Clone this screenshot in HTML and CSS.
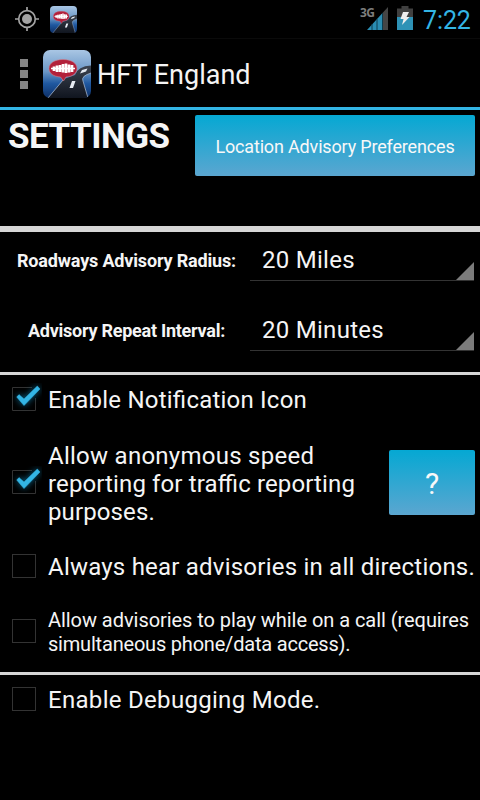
FILE: index.html
```html
<!DOCTYPE html>
<html lang="en">
<head>
  <meta charset="utf-8">
  <title>HFT England</title>
  <meta name="viewport" content="width=device-width, initial-scale=1.0">
  <link rel="stylesheet" href="styles.css">
</head>
<body>
  <!-- Shared icons -->
  <svg class="defs" width="0" height="0">
    <defs>
      <linearGradient id="sky" x1="0" y1="0" x2="0" y2="1">
        <stop offset="0" stop-color="#a9c6e4"/>
        <stop offset=".45" stop-color="#6b97c6"/>
        <stop offset=".7" stop-color="#1f58a0"/>
        <stop offset="1" stop-color="#0d2f66"/>
      </linearGradient>
      <linearGradient id="road" x1="0" y1="0" x2="0" y2="1">
        <stop offset="0" stop-color="#3c4450"/>
        <stop offset="1" stop-color="#10151f"/>
      </linearGradient>
      <clipPath id="tile"><rect width="48" height="48" rx="7"/></clipPath>
    </defs>
    <symbol id="app" viewBox="0 0 48 48">
      <g clip-path="url(#tile)">
        <rect width="48" height="48" fill="url(#sky)"/>
        <path d="M5 48 L21 29 L32 25 Q35 16 48 15.500 V23 Q37 26 40 31 L45 48Z" fill="url(#road)"/>
        <path d="M5 48 L20 30 M45 48 L40 31 Q38 26 48 23" stroke="#a3b4ca" stroke-width=".8" fill="none"/>
        <path d="M29 31 l3.500 0 -2.500 7 -3.500 0z M39 20 l5.500 -1.500 -1.500 3 -6 2z" fill="#e6ebf2"/>
        <path d="M20 9.500 C28.500 9.500 34 13 34 18.500 C34 23.500 29.500 26.500 23 27 L20.500 31 L17.500 27 C10.500 26.500 6 23.500 6 18.500 C6 13 11.500 9.500 20 9.500Z" fill="#b3203a" stroke="#c98592" stroke-width=".6"/>
        <path d="M8 18.500h24" stroke="#fff" stroke-width="1.500"/>
        <path d="M11 16.500v4.500M14 15.500v6.500M17 15v7M20 14v8.500M23 13.500v9.500M26 14.500v8M29 15v7" stroke="#fff" stroke-width="2.700"/>
      </g>
    </symbol>
    <symbol id="check" viewBox="0 0 32 32">
      <path d="M22 4.500H2.500V27.500H25.500V15" fill="none" stroke="#333"/>
      <path class="tick" d="M6.700 14 L9 11.600 L14 16 L27.300 3 L30 6 L14 22.600Z" fill="#33b5e5" stroke="#33b5e5" stroke-width=".5"/>
    </symbol>
    <symbol id="box" viewBox="0 0 32 32">
      <rect x="2.500" y="4.500" width="23" height="23" fill="none" stroke="#333"/>
    </symbol>
  </svg>

  <div class="status-bar">
    <svg class="gps" width="24" height="24" viewBox="0 0 24 24">
      <circle cx="12" cy="12" r="8.300" fill="none" stroke="#a3a3a3" stroke-width="1.700"/>
      <circle cx="12" cy="12" r="5" fill="#a3a3a3"/>
      <path d="M12 0v4M12 20v4M0 12h4M20 12h4" stroke="#a3a3a3" stroke-width="1.700"/>
    </svg>
    <svg class="mini-app" width="27" height="27"><use href="#app"/></svg>
    <div class="signal">
      <svg width="21" height="23" viewBox="0 0 21 23">
        <path d="M0 23 L15.500 6 V23Z" fill="#2a8db3"/>
        <path d="M15.500 6 L21 0 V23 H15.500Z" fill="#454545"/>
        <path d="M5 17v6M10 12v11M15.500 6v17" stroke="#0c3d50" stroke-width="1"/>
      </svg>
      <span class="net">3G</span>
    </div>
    <svg class="battery" width="16" height="24" viewBox="0 0 16 24">
      <path d="M0 2.500h4.500V0h7v2.500H16V11H0z" fill="#404040"/>
      <path d="M0 11h16v13H0z" fill="#2e92b6"/>
      <path d="M6 6h6l-2.500 5H12.500L5 19l1.500-6H3.500z" fill="#eee"/>
    </svg>
    <span class="clock">7:22</span>
  </div>

  <div class="action-bar">
    <div class="menu"><i></i><i></i><i></i></div>
    <svg class="app-icon" width="48" height="48"><use href="#app"/></svg>
    <span class="app-title">HFT England</span>
  </div>

  <div class="header">
    <h1>SETTINGS</h1>
    <button class="btn prefs">Location Advisory Preferences</button>
  </div>

  <div class="spinners">
    <div class="row">
      <label class="radius">Roadways Advisory Radius:</label>
      <div class="spinner">20 Miles</div>
    </div>
    <div class="row">
      <label class="interval">Advisory Repeat Interval:</label>
      <div class="spinner">20 Minutes</div>
    </div>
  </div>

  <div class="options">
    <div class="option notify">
      <svg class="cb" width="32" height="32"><use href="#check"/></svg>
      <span>Enable Notification Icon</span>
    </div>
    <div class="option speed">
      <svg class="cb" width="32" height="32"><use href="#check"/></svg>
      <span><b>Allow anonymous speed</b><br>reporting for traffic reporting<br>purposes.</span>
      <button class="btn help">?</button>
    </div>
    <div class="option always">
      <svg class="cb" width="32" height="32"><use href="#box"/></svg>
      <span>Always hear advisories in all directions.</span>
    </div>
    <div class="option call">
      <svg class="cb" width="32" height="32"><use href="#box"/></svg>
      <span><b>Allow advisories to play while on a call (requires</b><br>simultaneous phone/data access).</span>
    </div>
  </div>

  <div class="option debug">
    <svg class="cb" width="32" height="32"><use href="#box"/></svg>
    <span>Enable Debugging Mode.</span>
  </div>
</body>
</html>
```
FILE: styles.css
```css
* {
  box-sizing: border-box;
}
body {
  margin: 0;
  width: 480px;
  height: 800px;
  overflow: hidden;
  background: #000;
  color: #f5f5f5;
  font-family: Roboto, sans-serif;
  font-size: 24px;
  white-space: nowrap;
}
.defs {
  position: absolute;
}

/* Status bar */
.status-bar {
  display: flex;
  align-items: flex-start;
  height: 39px;
  padding-left: 15px;
  border-bottom: 1px solid #0a0a0a;
}
.gps {
  margin-top: 7px;
}
.mini-app {
  margin: 6px 0 0 11px;
}
.signal {
  position: relative;
  width: 21px;
  height: 23px;
  margin: 7px 0 0 290px;
}
.signal svg {
  display: block;
}
.net {
  position: absolute;
  left: -7px;
  top: -1px;
  color: #7d7d7d;
  font-family: "Open Sans", sans-serif;
  font-size: 12px;
  font-weight: bold;
  line-height: 13px;
  letter-spacing: -0.5px;
}
.battery {
  margin: 6px 0 0 9px;
}
.clock {
  margin: 5px 0 0 10px;
  color: #33b5e5;
  font-size: 25px;
  line-height: 31px;
  letter-spacing: -0.1px;
}

/* Action bar */
.action-bar {
  display: flex;
  align-items: center;
  height: 71px;
  padding-left: 20px;
  border-bottom: 3px solid #33b5e5;
}
.menu {
  display: flex;
  flex-direction: column;
  gap: 3px;
  width: 23px;
  margin-top: 2px;
}
.menu i {
  width: 8px;
  height: 8px;
  background: #858585;
}
.app-icon {
  margin-top: 2px;
}
.app-title {
  margin: 3px 0 0 6px;
  font-size: 27px;
}

.header {
  display: flex;
  justify-content: space-between;
  align-items: flex-start;
  height: 122px;
  padding: 5px 5px 0 8px;
  border-bottom: 6px solid #d6d6d6;
}
h1 {
  margin: 0;
  font-size: 35px;
  line-height: 44px;
  letter-spacing: -0.5px;
}
.btn {
  padding: 2px 0 0;
  border: none;
  border-radius: 2px;
  background: linear-gradient(#05a8d3, #5ba6d0);
  color: #f8f8f8;
  font-family: inherit;
}
.prefs {
  width: 280px;
  height: 61px;
  font-size: 18px;
  letter-spacing: -0.17px;
}

/* Spinners */
.spinners {
  height: 143px;
  border-bottom: 3px solid #d6d6d6;
}
.row {
  display: flex;
  height: 70px;
}
.row label {
  width: 250px;
  font-size: 18px;
  font-weight: bold;
  line-height: 58px;
}
.radius {
  padding-left: 17px;
  letter-spacing: -0.17px;
}
.interval {
  padding-left: 28px;
  letter-spacing: -0.26px;
}
.spinner {
  position: relative;
  width: 224px;
  height: 49px;
  padding-left: 12px;
  border-bottom: 1px solid #333;
  line-height: 56px;
  letter-spacing: 0.28px;
}
.spinner::after {
  content: "";
  position: absolute;
  right: 0;
  bottom: 0;
  border-left: 18px solid transparent;
  border-bottom: 18px solid #7b7b7b;
}

/* Checkbox list */
.options {
  height: 300px;
  border-bottom: 3px solid #d6d6d6;
}
.option {
  display: flex;
  align-items: center;
  padding: 0 5px 0 10px;
  line-height: 28px;
  letter-spacing: 0.22px;
  font-feature-settings: "liga" 1;
}
.option span {
  padding-top: 2px;
}
.option b {
  font-weight: normal;
}
.cb {
  flex: none;
  margin-right: 6px;
}
.tick {
  filter: drop-shadow(0 0 3px #0a6c94);
}
.notify,
.debug {
  height: 48px;
}
.debug {
  letter-spacing: 0.3px;
}
.speed {
  height: 119px;
  letter-spacing: 0.12px;
}
.speed b {
  letter-spacing: 0.26px;
}
.speed .cb {
  margin-bottom: 2px;
}
.always {
  height: 48px;
}
.call {
  height: 82px;
  font-size: 20px;
  line-height: 24px;
  letter-spacing: -0.2px;
}
.call b {
  letter-spacing: -0.05px;
}
.help {
  width: 86px;
  height: 65px;
  margin-left: auto;
  font-size: 30px;
}
```
